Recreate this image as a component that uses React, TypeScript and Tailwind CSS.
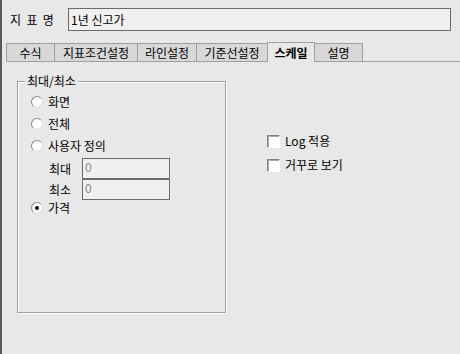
import { useState } from 'react';

const tabs = ['수식', '지표조건설정', '라인설정', '기준선설정', '스케일', '설명'];
const tabWidths = ['w-[49px]', 'w-[84px]', 'w-[60px]', 'w-[72px]', 'w-[48px]', 'w-[49px]'];

// 윈도우 라디오 버튼 모양
function Radio({ checked }: { checked?: boolean }) {
  return (
    <span className="flex h-[12px] w-[12px] items-center justify-center rounded-full border border-t-[#8a8a8a] border-l-[#8a8a8a] border-r-[#dcdcdc] border-b-[#dcdcdc] bg-white">
      {checked && <span className="h-[4px] w-[4px] rounded-full bg-black" />}
    </span>
  );
}

function Check() {
  return (
    <span className="block h-[13px] w-[13px] border border-t-[#808080] border-l-[#808080] border-r-white border-b-white bg-white shadow-[inset_1px_1px_0_#a8a8a8]" />
  );
}

export default function App() {
  const [active] = useState(4);

  return (
    <div className="h-[354px] w-[460px] overflow-hidden border-l-2 border-[#5a5a5a] bg-[#e8e8e8] font-['Noto_Sans_CJK_KR','Liberation_Sans',sans-serif] text-[12px] leading-none text-black">
      {/* 지표명 */}
      <div className="flex items-center pt-[8px]">
        <span className="w-[66px] shrink-0 whitespace-nowrap pl-[8px] text-[12px]">지&nbsp;&nbsp;표&nbsp;&nbsp;명</span>
        <div className="flex h-[23px] w-[383px] shrink-0 items-center border border-[#6a6a6a] bg-[#f0f0f0] pl-[2px]">1년 신고가</div>
      </div>

      {/* 탭 */}
      <div className="mt-[11px] flex h-[20px] items-end pl-[5px]">
        {tabs.map((t, i) =>
          i === active ? (
            <div key={t} className={`${tabWidths[i]} -ml-px flex h-[20px] items-center justify-center border border-b-0 border-[#a0a0a0] bg-[#e8e8e8] font-bold`}>
              {t}
            </div>
          ) : (
            <div key={t} className={`${tabWidths[i]} -ml-px flex h-[19px] items-center justify-center border border-[#a0a0a0] bg-[#d8d8d8]`}>
              {t}
            </div>
          )
        )}
        <div className="h-[19px] flex-1 border-b border-[#a0a0a0]" />
      </div>

      <div className="mt-[19px] flex">
        {/* 최대/최소 그룹 */}
        <div className="relative ml-[15px] h-[232px] w-[209px] border border-[#a0a0a0] shadow-[inset_1px_1px_0_#fff,1px_1px_0_#fff]">
          <span className="absolute -top-[7px] left-[7px] bg-[#e8e8e8] px-[2px]">최대/최소</span>
          <div className="flex flex-col pl-[13px] pt-[9px]">
            <div className="flex h-[22px] items-center gap-[5px]">
              <Radio />
              <span>화면</span>
            </div>
            <div className="flex h-[21px] items-center gap-[5px]">
              <Radio />
              <span>전체</span>
            </div>
            <div className="flex h-[24px] items-center gap-[5px]">
              <Radio />
              <span>사용자 정의</span>
            </div>
            <div className="flex h-[21px] items-center">
              <span className="w-[51px] pl-[18px]">최대</span>
              <div className="h-[21px] w-[88px] border border-[#6a6a6a] bg-[#f0f0f0] pl-[2px] pt-[2px] text-[#8a8a8a]">0</div>
            </div>
            <div className="flex h-[21px] items-center">
              <span className="w-[51px] pl-[18px]">최소</span>
              <div className="h-[21px] w-[88px] border border-[#6a6a6a] bg-[#f0f0f0] pl-[2px] pt-[2px] text-[#8a8a8a]">0</div>
            </div>
            <div className="flex h-[16px] items-center gap-[5px]">
              <Radio checked />
              <span>가격</span>
            </div>
          </div>
        </div>

        {/* 체크박스 */}
        <div className="ml-[41px] flex flex-col pt-[48px]">
          <div className="flex h-[24px] items-center gap-[5px]">
            <Check />
            <span>Log 적용</span>
          </div>
          <div className="flex h-[24px] items-center gap-[5px]">
            <Check />
            <span>거꾸로 보기</span>
          </div>
        </div>
      </div>
    </div>
  );
}
